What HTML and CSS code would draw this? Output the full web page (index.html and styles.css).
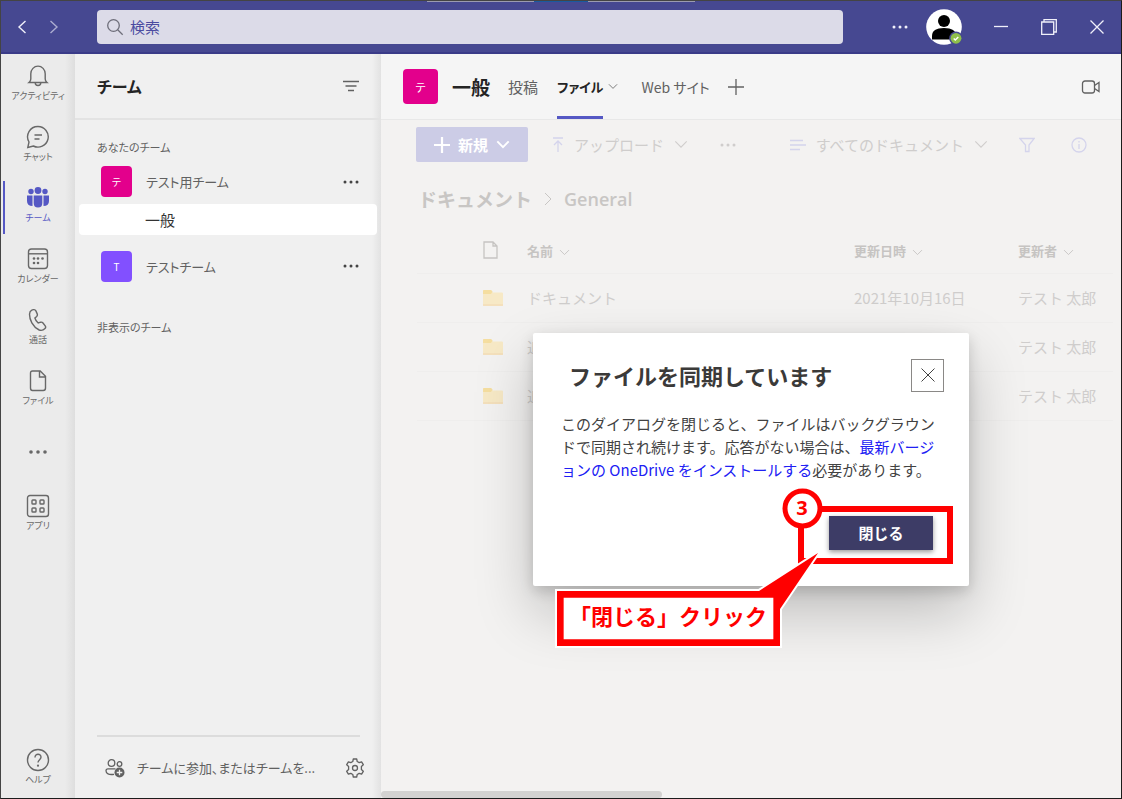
FILE: index.html
```html
<!DOCTYPE html>
<html lang="ja">
<head>
<meta charset="utf-8">
<meta name="viewport" content="width=device-width, initial-scale=1">
<title>一般 - ファイル</title>
<link rel="stylesheet" href="styles.css">
</head>
<body>
<svg class="defs" aria-hidden="true">
  <symbol id="chev" viewBox="0 0 16 10"><path d="M1.500 1.500 8 8l6.500-6.500"/></symbol>
  <symbol id="dots" viewBox="0 0 18 4"><circle cx="3" cy="2" r="1.500"/><circle cx="9" cy="2" r="1.500"/><circle cx="15" cy="2" r="1.500"/></symbol>
  <symbol id="folder" viewBox="0 0 20 16"><path d="M0 1q0-1 1-1h7l2 2.500h9q1 0 1 1V15q0 1-1 1H1q-1 0-1-1z" fill="#f7e9c6"/><path d="M0 1q0-1 1-1h7l1.500 1.500L8 4H0z" fill="#f5dea0"/><path d="M0 15h20" stroke="#f3dcb8" stroke-width="1.500"/></symbol>
</svg>
<div class="window">
  <header class="titlebar">
    <div class="backdrop"><span></span><span class="blue"></span><span></span></div>
    <nav class="history">
      <button aria-label="戻る"><svg width="10" height="16" viewBox="0 0 10 16"><path d="M8.500 2 2 8l6.500 6"/></svg></button>
      <button class="dim" aria-label="進む"><svg width="10" height="16" viewBox="0 0 10 16"><path d="M1.500 2 8 8l-6.500 6"/></svg></button>
    </nav>
    <label class="search">
      <svg width="18" height="18" viewBox="0 0 18 18"><circle cx="7.500" cy="7.500" r="5.800"/><path d="m11.700 11.700 5 5"/></svg>
      <input type="text" placeholder="検索" aria-label="検索">
    </label>
    <button class="tb-more" aria-label="その他"><svg width="18" height="4"><use href="#dots"/></svg></button>
    <button class="avatar" aria-label="プロフィール">
      <svg width="38" height="38" viewBox="0 0 38 38"><circle cx="18" cy="19" r="17.800" fill="#fff"/><circle cx="18" cy="13" r="6" fill="#000"/><path d="M6 31.500V28q0-8 12-8t12 8v3.500z" fill="#000"/><circle cx="30" cy="30.300" r="6.800" fill="#464891"/><circle cx="30" cy="30.300" r="5.400" fill="#8fbf4b"/><path d="m27.700 30.500 1.600 1.600 3-3.200" fill="none" stroke="#fff" stroke-width="1.400"/></svg>
    </button>
    <div class="wincontrols">
      <button aria-label="最小化"><svg width="16" height="16" viewBox="0 0 16 16"><path d="M1 7.500h14"/></svg></button>
      <button aria-label="元に戻す"><svg width="16" height="16" viewBox="0 0 16 16"><path d="M.7 3h12v12.300H.7zM3 2.500V.7h12.300V13H13"/></svg></button>
      <button aria-label="閉じる"><svg width="16" height="16" viewBox="0 0 16 16"><path d="m1.500 1.500 13 13m0-13-13 13"/></svg></button>
    </div>
  </header>

  <div class="body">
    <nav class="rail">
      <button><svg width="24" height="24" viewBox="0 0 24 24"><path d="M3 18.500q1.800-1.500 1.800-3.500V9.800a7.200 7.700 0 0 1 14.400 0V15q0 2 1.800 3.500zM9.200 18.700a2.800 2.800 0 0 0 5.600 0"/></svg><span>アクティビティ</span></button>
      <button><svg width="24" height="24" viewBox="0 0 24 24"><path d="M12 1.500a10.300 10.300 0 1 1-4.700 19.500L1.800 22.500 3 17A10.300 10.300 0 0 1 12 1.500zM8.500 10h7.500M8.500 14h5"/></svg><span>チャット</span></button>
      <button class="active"><svg width="24" height="24" viewBox="0 0 24 24"><circle cx="5" cy="5.500" r="2.700"/><circle cx="12" cy="4.500" r="3.400"/><circle cx="19" cy="5.500" r="2.700"/><path d="M1 9.500h5.500V20Q1 20 1 15zM23 9.500h-5.500V20q5.500 0 5.500-5zM7.700 9.500h8.600V17q0 4.500-4.300 4.500T7.700 17z"/></svg><span>チーム</span></button>
      <button><svg width="24" height="24" viewBox="0 0 24 24"><rect x="2.500" y="2" width="19" height="19.500" rx="3"/><path d="M2.500 6.800h19"/><g class="solid"><circle cx="8" cy="11.500" r="1.300"/><circle cx="12" cy="11.500" r="1.300"/><circle cx="16.500" cy="11.500" r="1.300"/><circle cx="8" cy="16" r="1.300"/><circle cx="12" cy="16" r="1.300"/></g></svg><span>カレンダー</span></button>
      <button><svg width="24" height="24" viewBox="0 0 24 24"><path d="M5.800 2.200 7.300 1.700q1.800-.5 2.600 1.200l1.300 3q.6 1.400-.5 2.500L8.900 10q.8 3 3.300 5l2.500-.8q1.400-.3 2.300.8l2.200 2.900q1 1.400-.2 2.600-2.600 2.800-5.800 1.500C6.500 18.700 3.500 11.500 3.500 6.300q.1-3.100 2.300-4.100z"/></svg><span>通話</span></button>
      <button><svg width="24" height="24" viewBox="0 0 24 24"><path d="M6.500 2h7.700l5.300 5.300V19q0 2.500-2.300 2.500H6.500q-2 0-2-2.500V4.300Q4.500 2 6.500 2zM13.500 2.500V8h5.500"/></svg><span>ファイル</span></button>
      <button class="more" aria-label="その他のアプリ"><svg class="fill" width="20" height="4" viewBox="0 0 20 4"><circle cx="3" cy="2" r="1.800"/><circle cx="10" cy="2" r="1.800"/><circle cx="17" cy="2" r="1.800"/></svg></button>
      <button><svg width="24" height="24" viewBox="0 0 24 24"><rect x="1.500" y="1.500" width="21" height="21" rx="2.500"/><rect x="6" y="6" width="4" height="4" rx=".8"/><rect x="14" y="6" width="4" height="4" rx=".8"/><rect x="6" y="14" width="4" height="4" rx=".8"/><rect x="14" y="14" width="4" height="4" rx=".8"/></svg><span>アプリ</span></button>
      <button class="help"><svg width="24" height="24" viewBox="0 0 24 24"><circle cx="12" cy="12" r="10.500"/><path d="M9 9.500C9 5 15.200 5.500 15 9.300c-.1 2.300-3 2.500-3 5.200"/><circle class="solid" cx="12" cy="17.700" r="1.100"/></svg><span>ヘルプ</span></button>
    </nav>

    <aside class="teams">
      <div class="teams-head">
        <h2>チーム</h2>
        <button aria-label="フィルター"><svg width="16" height="12" viewBox="0 0 16 12"><path d="M0 1.500h16M2.500 6h11M5 10.500h6"/></svg></button>
      </div>
      <div class="teams-list">
        <h3>あなたのチーム</h3>
        <div class="team"><span class="tile pink">テ</span><span class="name">テスト用チーム</span><button aria-label="その他"><svg width="18" height="4"><use href="#dots"/></svg></button></div>
        <a class="channel" href="#general">一般</a>
        <div class="team second"><span class="tile violet">T</span><span class="name">テストチーム</span><button aria-label="その他"><svg width="18" height="4"><use href="#dots"/></svg></button></div>
        <h3 class="hidden-teams">非表示のチーム</h3>
      </div>
      <hr>
      <div class="teams-foot">
        <button class="join"><svg width="20" height="20" viewBox="0 0 20 20"><circle cx="6.500" cy="5" r="3.300"/><circle cx="14.500" cy="6" r="2.300"/><path d="M9 16.300q-8 1-8-3.500 0-2 2-2h7.500"/><circle class="solid" cx="14.500" cy="14.500" r="5"/><path class="plus" d="M14.500 11.700v5.600M11.700 14.500h5.600"/></svg><span>チームに参加、またはチームを...</span></button>
        <button aria-label="設定"><svg width="20" height="20" viewBox="0 0 20 20"><circle cx="10" cy="10" r="2.500"/><path d="M8.300 1h3.400l.5 2.500 2 1.100 2.400-.8 1.700 2.900-1.900 1.700v3.200l1.900 1.700-1.700 2.900-2.400-.8-2 1.100-.5 2.500H8.300l-.5-2.500-2-1.100-2.400.8-1.700-2.900 1.900-1.700V8.400L1.700 6.700l1.700-2.900 2.400.8 2-1.100z" stroke-linejoin="round"/></svg></button>
      </div>
    </aside>

    <main class="main">
      <div class="chan-head">
        <span class="tile pink large">テ</span>
        <h1>一般</h1>
        <nav class="tabs">
          <a href="#posts">投稿</a>
          <a class="on" href="#files">ファイル</a>
          <button aria-label="タブのオプション"><svg width="10" height="7"><use href="#chev"/></svg></button>
          <a class="web" href="#web">Web サイト</a>
          <button class="add" aria-label="タブを追加"><svg width="18" height="18" viewBox="0 0 18 18"><path d="M9 1v16M1 9h16"/></svg></button>
        </nav>
        <button class="meet" aria-label="会議"><svg width="20" height="16" viewBox="0 0 20 16"><rect x="1.500" y="2" width="12" height="12" rx="2.500"/><path d="m13.500 6.500 4.500-3v9l-4.500-3"/></svg></button>
      </div>

      <section class="files">
        <div class="toolbar">
          <button class="new"><svg width="16" height="16" viewBox="0 0 16 16"><path d="M8 0v16M0 8h16"/></svg><span>新規</span><svg width="14" height="9"><use href="#chev"/></svg></button>
          <button class="upload"><svg class="lilac" width="12" height="16" viewBox="0 0 12 16"><path d="M1 1h10M6 15V4M2 8l4-4 4 4"/></svg><span>アップロード</span><svg width="14" height="9"><use href="#chev"/></svg></button>
          <button aria-label="その他"><svg width="18" height="4"><use href="#dots"/></svg></button>
          <button class="view"><svg class="lilac" width="16" height="12" viewBox="0 0 16 12"><path d="M0 1.500h13M0 6h16M0 10.500h10"/></svg><span>すべてのドキュメント</span><svg width="14" height="9"><use href="#chev"/></svg></button>
          <button class="lilac" aria-label="フィルター"><svg width="16" height="16" viewBox="0 0 16 16"><path d="M.8 1.500h14.400L10 8v6.500H6.500V8z"/></svg></button>
          <button class="lilac" aria-label="情報"><svg width="16" height="16" viewBox="0 0 16 16"><circle cx="8" cy="8" r="7"/><path d="M8 7v5M8 4v1.500"/></svg></button>
        </div>
        <nav class="crumbs"><a href="#docs">ドキュメント</a><svg width="8" height="14" viewBox="0 0 8 14"><path d="m1 1 6 6-6 6"/></svg><span>General</span></nav>
        <table>
          <thead><tr>
            <th class="c-icon"><svg width="16" height="18" viewBox="0 0 16 18"><path d="M1 1h9l4 4v12H1zM10 1v4h4"/></svg></th>
            <th>名前 <svg width="11" height="7"><use href="#chev"/></svg></th>
            <th class="c-date">更新日時 <svg width="11" height="7"><use href="#chev"/></svg></th>
            <th class="c-by">更新者 <svg width="11" height="7"><use href="#chev"/></svg></th>
          </tr></thead>
          <tbody>
            <tr><td class="c-icon"><svg width="20" height="16"><use href="#folder"/></svg></td><td>ドキュメント</td><td>2021年10月16日</td><td>テスト 太郎</td></tr>
            <tr><td class="c-icon"><svg width="20" height="16"><use href="#folder"/></svg></td><td>追</td><td></td><td>テスト 太郎</td></tr>
            <tr><td class="c-icon"><svg width="20" height="16"><use href="#folder"/></svg></td><td>追</td><td></td><td>テスト 太郎</td></tr>
          </tbody>
        </table>
        <div class="hscroll"></div>

        <div class="overlay">
          <div class="dialog" role="dialog" aria-labelledby="dlg-title">
            <div class="dlg-head">
              <h2 id="dlg-title">ファイルを同期しています</h2>
              <button aria-label="閉じる"><svg width="16" height="16" viewBox="0 0 16 16"><path d="m1.500 1.500 13 13m0-13-13 13"/></svg></button>
            </div>
            <p>このダイアログを閉じると、ファイルはバックグラウンドで同期され続けます。応答がない場合は、<a href="#install">最新バージョンの OneDrive をインストールする</a>必要があります。</p>
            <button class="primary">閉じる</button>
            <div class="marks">
              <svg width="436" height="320" viewBox="0 0 436 320">
                <rect x="268" y="176" width="149" height="52" fill="none" stroke="#f00" stroke-width="6"/>
                <circle cx="269.500" cy="175.500" r="17.500" fill="#fff" stroke="#f00" stroke-width="5"/>
                <path d="M24 258h202l59-38-38 56v37H24z" fill="#f00" stroke="#fff" stroke-width="4" paint-order="stroke"/>
                <path d="M30 264h211v43H30z" fill="#fff"/>
              </svg>
              <span class="step">3</span>
              <span class="callout">「閉じる」クリック</span>
            </div>
          </div>
        </div>
      </section>
    </main>
  </div>
</div>
</body>
</html>
```

FILE: styles.css
```css
* { box-sizing: border-box; }

html, body { height: 100%; margin: 0; }

body {
  font-family: "Noto Sans CJK JP", sans-serif;
  font-size: 15px;
  color: #616161;
}

h1, h2, h3, p { margin: 0; }
a { color: inherit; text-decoration: none; }

button {
  display: flex;
  align-items: center;
  justify-content: center;
  padding: 0;
  border: 0;
  background: none;
  color: inherit;
  font: inherit;
}

svg { display: block; flex: none; fill: none; stroke: currentColor; stroke-width: 1.3; }
#dots { fill: currentColor; stroke: none; }
#folder { stroke: none; }
.defs { position: absolute; width: 0; height: 0; }

.window {
  display: flex;
  flex-direction: column;
  height: 100vh;
  min-height: 640px;
  border: 1px solid #1c1c1c;
  border-top-color: #444;
  border-left-color: #444;
}

/* Title bar */
.titlebar {
  position: relative;
  display: flex;
  align-items: center;
  flex: none;
  height: 53px;
  background: #464891;
  border-bottom: 2px solid #3a3b88;
  color: #f0f0fa;
}

.backdrop { position: absolute; top: 0; left: 38%; right: 38%; display: flex; height: 1px; }
.backdrop span { flex: 2; background: #9b9bb0; }
.backdrop .blue { flex: 1; background: #1a5a9e; }

.history { display: flex; width: 96px; padding-left: 16px; gap: 22px; }
.history svg { stroke-width: 1.4; }
.dim { opacity: .6; }

.search {
  display: flex;
  align-items: center;
  flex: 1;
  height: 34px;
  padding-left: 9px;
  gap: 6px;
  border-radius: 4px;
  background: #dcdbe8;
  color: #6e6e7a;
}

.search input {
  flex: 1;
  min-width: 0;
  padding: 0;
  border: 0;
  outline: 0;
  background: none;
  color: #4b4ba0;
  font: inherit;
}
.search input::placeholder { color: #4b4ba0; opacity: 1; }

.tb-more { width: 32px; margin-left: 41px; }
.avatar { width: 36px; margin: 0 15px 0 10px; justify-content: flex-start; }
.avatar svg { stroke: none; }
.wincontrols { display: flex; }
.wincontrols button { width: 48px; height: 40px; }

.body { display: flex; flex: 1; min-height: 0; }

/* App rail */
.rail {
  display: flex;
  flex-direction: column;
  flex: none;
  width: 74px;
  padding-top: 5px;
  background: linear-gradient(to left, #dedede, #ebebeb 10px);
  color: #686868;
  font-size: 9px;
  font-feature-settings: "palt";
}

.rail button {
  flex-direction: column;
  justify-content: flex-start;
  flex: none;
  height: 61px;
  padding-top: 5px;
  gap: 1px;
  line-height: 14px;
}
.rail svg { stroke-width: 1.4; }
.rail .active { color: #5558c4; border-left: 2px solid #5558c4; margin-left: 2px; padding-right: 4px; height: 53px; margin-bottom: 8px; }
.rail .active svg, .rail .fill { fill: currentColor; stroke: none; }
.rail .more { height: 64px; padding-top: 25px; }
.rail .help { margin-top: auto; height: 50px; margin-bottom: 5px; }
.solid { fill: currentColor; stroke: none; }

/* Team list */
.teams {
  display: flex;
  flex-direction: column;
  flex: none;
  width: 306px;
  background: linear-gradient(to left, #e2e2e2, #f0f0f0 9px);
  font-size: 13px;
  font-feature-settings: "palt";
}

.teams-head {
  display: flex;
  align-items: center;
  justify-content: space-between;
  height: 66px;
  padding: 0 22px;
  border-bottom: 2px solid #e3e3e3;
}
.teams-head h2 { font-size: 16px; color: #242424; }

.teams-list { flex: 1; padding: 15px 4px 0; }
.teams-list h3 { padding-left: 18px; font-size: 11px; font-weight: 400; line-height: 24px; }

.team { display: flex; align-items: center; height: 45px; padding: 0 17px 0 22px; gap: 14px; }
.team .name { flex: 1; }
.team button { color: #444; }
.team.second { height: 62px; }

.tile {
  display: flex;
  align-items: center;
  justify-content: center;
  flex: none;
  width: 31px;
  height: 31px;
  border-radius: 4px;
  color: #fff;
  font-size: 10px;
}
.pink { background: #e3008c; }
.violet { background: #8250ff; }
.tile.large { width: 35px; height: 35px; font-size: 11px; }

.channel { display: block; padding-left: 66px; border-radius: 4px; background: #fff; color: #333; font-size: 15px; line-height: 31px; }
.hidden-teams { padding-top: 18px; }

.teams hr { width: auto; height: 2px; margin: 0 21px 0 22px; border: 0; background: #dcdcdc; }
.teams-foot {
  display: flex;
  align-items: center;
  justify-content: space-between;
  height: 61px;
  padding: 0 16px 0 30px;
}
.join { gap: 12px; }
.join .plus { stroke: #f0f0f0; }

/* Channel */
.main { display: flex; flex-direction: column; flex: 1; min-width: 0; }

.chan-head {
  display: flex;
  align-items: center;
  flex: none;
  height: 66px;
  padding: 0 20px 0 22px;
  border-bottom: 1px solid #e8e8e8;
  background: #f5f5f5;
}
.chan-head h1 { margin: 0 18px 0 14px; font-size: 19px; color: #242424; }

.tabs { display: flex; align-items: center; align-self: stretch; }
.tabs a { display: flex; align-items: center; height: 100%; font-feature-settings: "palt"; }
.tabs .on { margin: 0 5px 0 19px; border-top: 3px solid transparent; border-bottom: 3px solid #5558c4; color: #242424; font-weight: 700; font-size: 13px; }
.tabs .web { font-size: 14px; }
.tabs button { margin-right: 23px; }
.tabs .add { margin: 0 0 0 17px; }
.meet { margin-left: auto; }

.files {
  position: relative;
  display: flex;
  flex-direction: column;
  flex: 1;
  min-height: 0;
  background: #f3f2f1;
  color: #cfcdcc;
}

.toolbar { display: flex; align-items: center; padding: 7px 34px 0 35px; }
.toolbar .new { width: 112px; height: 35px; gap: 8px; border-radius: 2px; background: #cccce6; color: #fff; font-weight: 700; }
.toolbar .new svg { stroke-width: 2.2; }
.toolbar .upload { margin: 0 31px 0 24px; gap: 10px; }
.toolbar .view { margin: 0 31px 0 auto; gap: 10px; }
.toolbar .lilac + .lilac { margin-left: 36px; }
.lilac { color: #d4d4ec; }

.crumbs { display: flex; align-items: center; padding: 22px 0 0 37px; gap: 12px; font-size: 19px; font-weight: 700; line-height: 30px; color: #c8c6c4; }
.crumbs svg { stroke-width: 1; }
.crumbs span { font-family: "Open Sans", sans-serif; font-size: 18px; font-weight: 600; }

table { width: auto; margin: 14px 8px 0 36px; border-collapse: collapse; table-layout: fixed; }
th, td { padding: 0; height: 49px; border-bottom: 1px solid #efeeed; text-align: left; white-space: nowrap; }
th { height: 45px; font-size: 13px; color: #c6c4c2; }
th svg { display: inline-block; margin-left: 3px; }
.c-icon { width: 110px; }
.c-icon svg { display: block; margin-left: 66px; }
.c-date { width: 164px; }
.c-by { width: 95px; }

.hscroll { width: 38%; height: 7px; margin-top: auto; border-radius: 4px; background: #d3d2d1; }

/* Dialog */
.overlay { position: absolute; inset: 0; display: flex; align-items: center; justify-content: center; }

.dialog {
  position: relative;
  width: 436px;
  padding: 26px 25px 36px 28px;
  border-radius: 2px;
  background: #fff;
  box-shadow: 0 26px 58px rgba(0, 0, 0, .22), 0 5px 14px rgba(0, 0, 0, .16);
  color: #424242;
}
.dlg-head { display: flex; align-items: center; justify-content: space-between; padding-left: 8px; }
.dlg-head h2 { font-size: 22px; line-height: 33px; color: #3b3a39; }
.dlg-head button { width: 33px; height: 33px; border: 1px solid #8a8886; }
.dlg-head svg { stroke-width: 1; }
.dialog p { margin-top: 20px; line-height: 23px; line-break: loose; }
.dialog p a { color: #2020f4; }
.primary {
  width: 104px;
  height: 34px;
  margin: 35px 11px 0 auto;
  background: #3d3c66;
  box-shadow: 0 2px 5px rgba(0, 0, 0, .4);
  color: #fff;
  font-weight: 700;
}

/* Annotation over the dialog */
.marks { position: absolute; inset: 0; color: #f00; font-weight: 700; pointer-events: none; }
.marks svg { position: absolute; top: 0; left: 0; overflow: visible; }
.step { position: absolute; top: 160px; left: 254px; width: 30px; font-family: "Open Sans", sans-serif; font-size: 20px; line-height: 30px; text-align: center; }
.callout { position: absolute; top: 264px; left: 30px; width: 211px; padding-left: 6px; font-size: 22px; line-height: 36px; white-space: nowrap; }
```
